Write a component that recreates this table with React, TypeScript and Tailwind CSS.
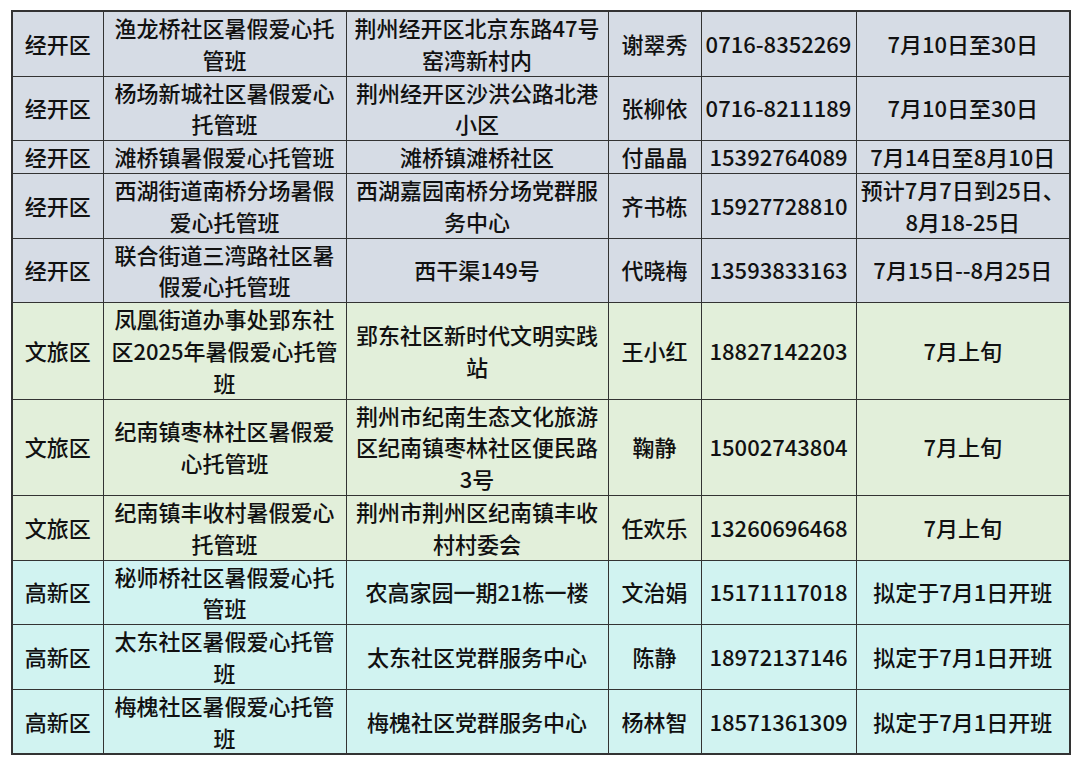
import React from "react";

interface Row {
  area: string;
  name: string;
  address: string;
  contact: string;
  phone: string;
  time: string;
  bg: string;
}

const BLUE = "bg-[#d6dce5]";
const GREEN = "bg-[#e2efda]";
const CYAN = "bg-[#d1f3f1]";

const rows: Row[] = [
  { area: "经开区", name: "渔龙桥社区暑假爱心托\n管班", address: "荆州经开区北京东路47号\n窑湾新村内", contact: "谢翠秀", phone: "0716-8352269", time: "7月10日至30日", bg: BLUE },
  { area: "经开区", name: "杨场新城社区暑假爱心\n托管班", address: "荆州经开区沙洪公路北港\n小区", contact: "张柳依", phone: "0716-8211189", time: "7月10日至30日", bg: BLUE },
  { area: "经开区", name: "滩桥镇暑假爱心托管班", address: "滩桥镇滩桥社区", contact: "付晶晶", phone: "15392764089", time: "7月14日至8月10日", bg: BLUE },
  { area: "经开区", name: "西湖街道南桥分场暑假\n爱心托管班", address: "西湖嘉园南桥分场党群服\n务中心", contact: "齐书栋", phone: "15927728810", time: "预计7月7日到25日、\n8月18-25日", bg: BLUE },
  { area: "经开区", name: "联合街道三湾路社区暑\n假爱心托管班", address: "西干渠149号", contact: "代晓梅", phone: "13593833163", time: "7月15日--8月25日", bg: BLUE },
  { area: "文旅区", name: "凤凰街道办事处郢东社\n区2025年暑假爱心托管\n班", address: "郢东社区新时代文明实践\n站", contact: "王小红", phone: "18827142203", time: "7月上旬", bg: GREEN },
  { area: "文旅区", name: "纪南镇枣林社区暑假爱\n心托管班", address: "荆州市纪南生态文化旅游\n区纪南镇枣林社区便民路\n3号", contact: "鞠静", phone: "15002743804", time: "7月上旬", bg: GREEN },
  { area: "文旅区", name: "纪南镇丰收村暑假爱心\n托管班", address: "荆州市荆州区纪南镇丰收\n村村委会", contact: "任欢乐", phone: "13260696468", time: "7月上旬", bg: GREEN },
  { area: "高新区", name: "秘师桥社区暑假爱心托\n管班", address: "农高家园一期21栋一楼", contact: "文治娟", phone: "15171117018", time: "拟定于7月1日开班", bg: CYAN },
  { area: "高新区", name: "太东社区暑假爱心托管\n班", address: "太东社区党群服务中心", contact: "陈静", phone: "18972137146", time: "拟定于7月1日开班", bg: CYAN },
  { area: "高新区", name: "梅槐社区暑假爱心托管\n班", address: "梅槐社区党群服务中心", contact: "杨林智", phone: "18571361309", time: "拟定于7月1日开班", bg: CYAN },
];

const Cell: React.FC<{ text: string }> = ({ text }) => (
  <td className="border border-[#333] px-1 py-0 text-center align-middle whitespace-pre leading-[31.8px]">
    {text}
  </td>
);

const App: React.FC = () => (
  <div className="min-h-[766px] bg-white pl-[11px] pt-[10px]">
    <table
      className="w-[1058px] table-fixed border-collapse border-2 border-[#333] text-[22px] font-medium text-[#111]"
      style={{ fontFamily: '"Noto Sans CJK SC", "Noto Sans", sans-serif' }}
    >
      <colgroup>
        <col className="w-[91px]" />
        <col className="w-[243px]" />
        <col className="w-[262px]" />
        <col className="w-[93px]" />
        <col className="w-[155px]" />
        <col className="w-[214px]" />
      </colgroup>
      <tbody>
        {rows.map((r, i) => (
          <tr key={i} className={r.bg}>
            <Cell text={r.area} />
            <Cell text={r.name} />
            <Cell text={r.address} />
            <Cell text={r.contact} />
            <Cell text={r.phone} />
            <Cell text={r.time} />
          </tr>
        ))}
      </tbody>
    </table>
  </div>
);

export default App;
